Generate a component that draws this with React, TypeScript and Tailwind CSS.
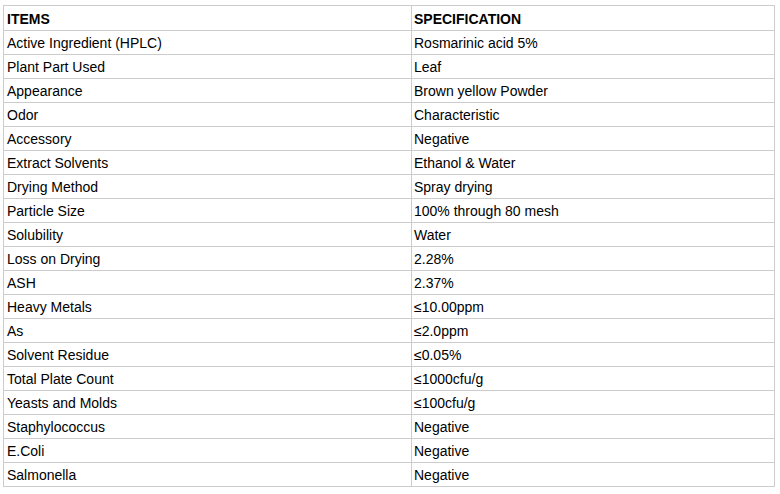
const rows: [string, string][] = [
  ["Active Ingredient (HPLC)", "Rosmarinic acid 5%"],
  ["Plant Part Used", "Leaf"],
  ["Appearance", "Brown yellow Powder"],
  ["Odor", "Characteristic"],
  ["Accessory", "Negative"],
  ["Extract Solvents", "Ethanol & Water"],
  ["Drying Method", "Spray drying"],
  ["Particle Size", "100% through 80 mesh"],
  ["Solubility", "Water"],
  ["Loss on Drying", "2.28%"],
  ["ASH", "2.37%"],
  ["Heavy Metals", "≤10.00ppm"],
  ["As", "≤2.0ppm"],
  ["Solvent Residue", "≤0.05%"],
  ["Total Plate Count", "≤1000cfu/g"],
  ["Yeasts and Molds", "≤100cfu/g"],
  ["Staphylococcus", "Negative"],
  ["E.Coli", "Negative"],
  ["Salmonella", "Negative"],
];

export default function App() {
  return (
    <div className="min-h-screen bg-white pl-[3px] pt-[5px] font-['Liberation_Sans',Arial,sans-serif] text-[14px] text-black">
      <table className="w-[772px] border-collapse">
        <thead>
          <tr className="h-[25px]">
            <th className="w-[408px] border border-[#cccccc] px-[3px] pt-[2px] text-left font-bold">ITEMS</th>
            <th className="border border-[#cccccc] pl-[2px] pt-[2px] text-left font-bold">SPECIFICATION</th>
          </tr>
        </thead>
        <tbody>
          {rows.map(([item, spec]) => (
            <tr key={item} className="h-[24px]">
              <td className="border border-[#cccccc] px-[3px] pt-[2px] pb-0">{item}</td>
              <td className="border border-[#cccccc] pl-[2px] pt-[2px] pb-0">{spec}</td>
            </tr>
          ))}
        </tbody>
      </table>
    </div>
  );
}
